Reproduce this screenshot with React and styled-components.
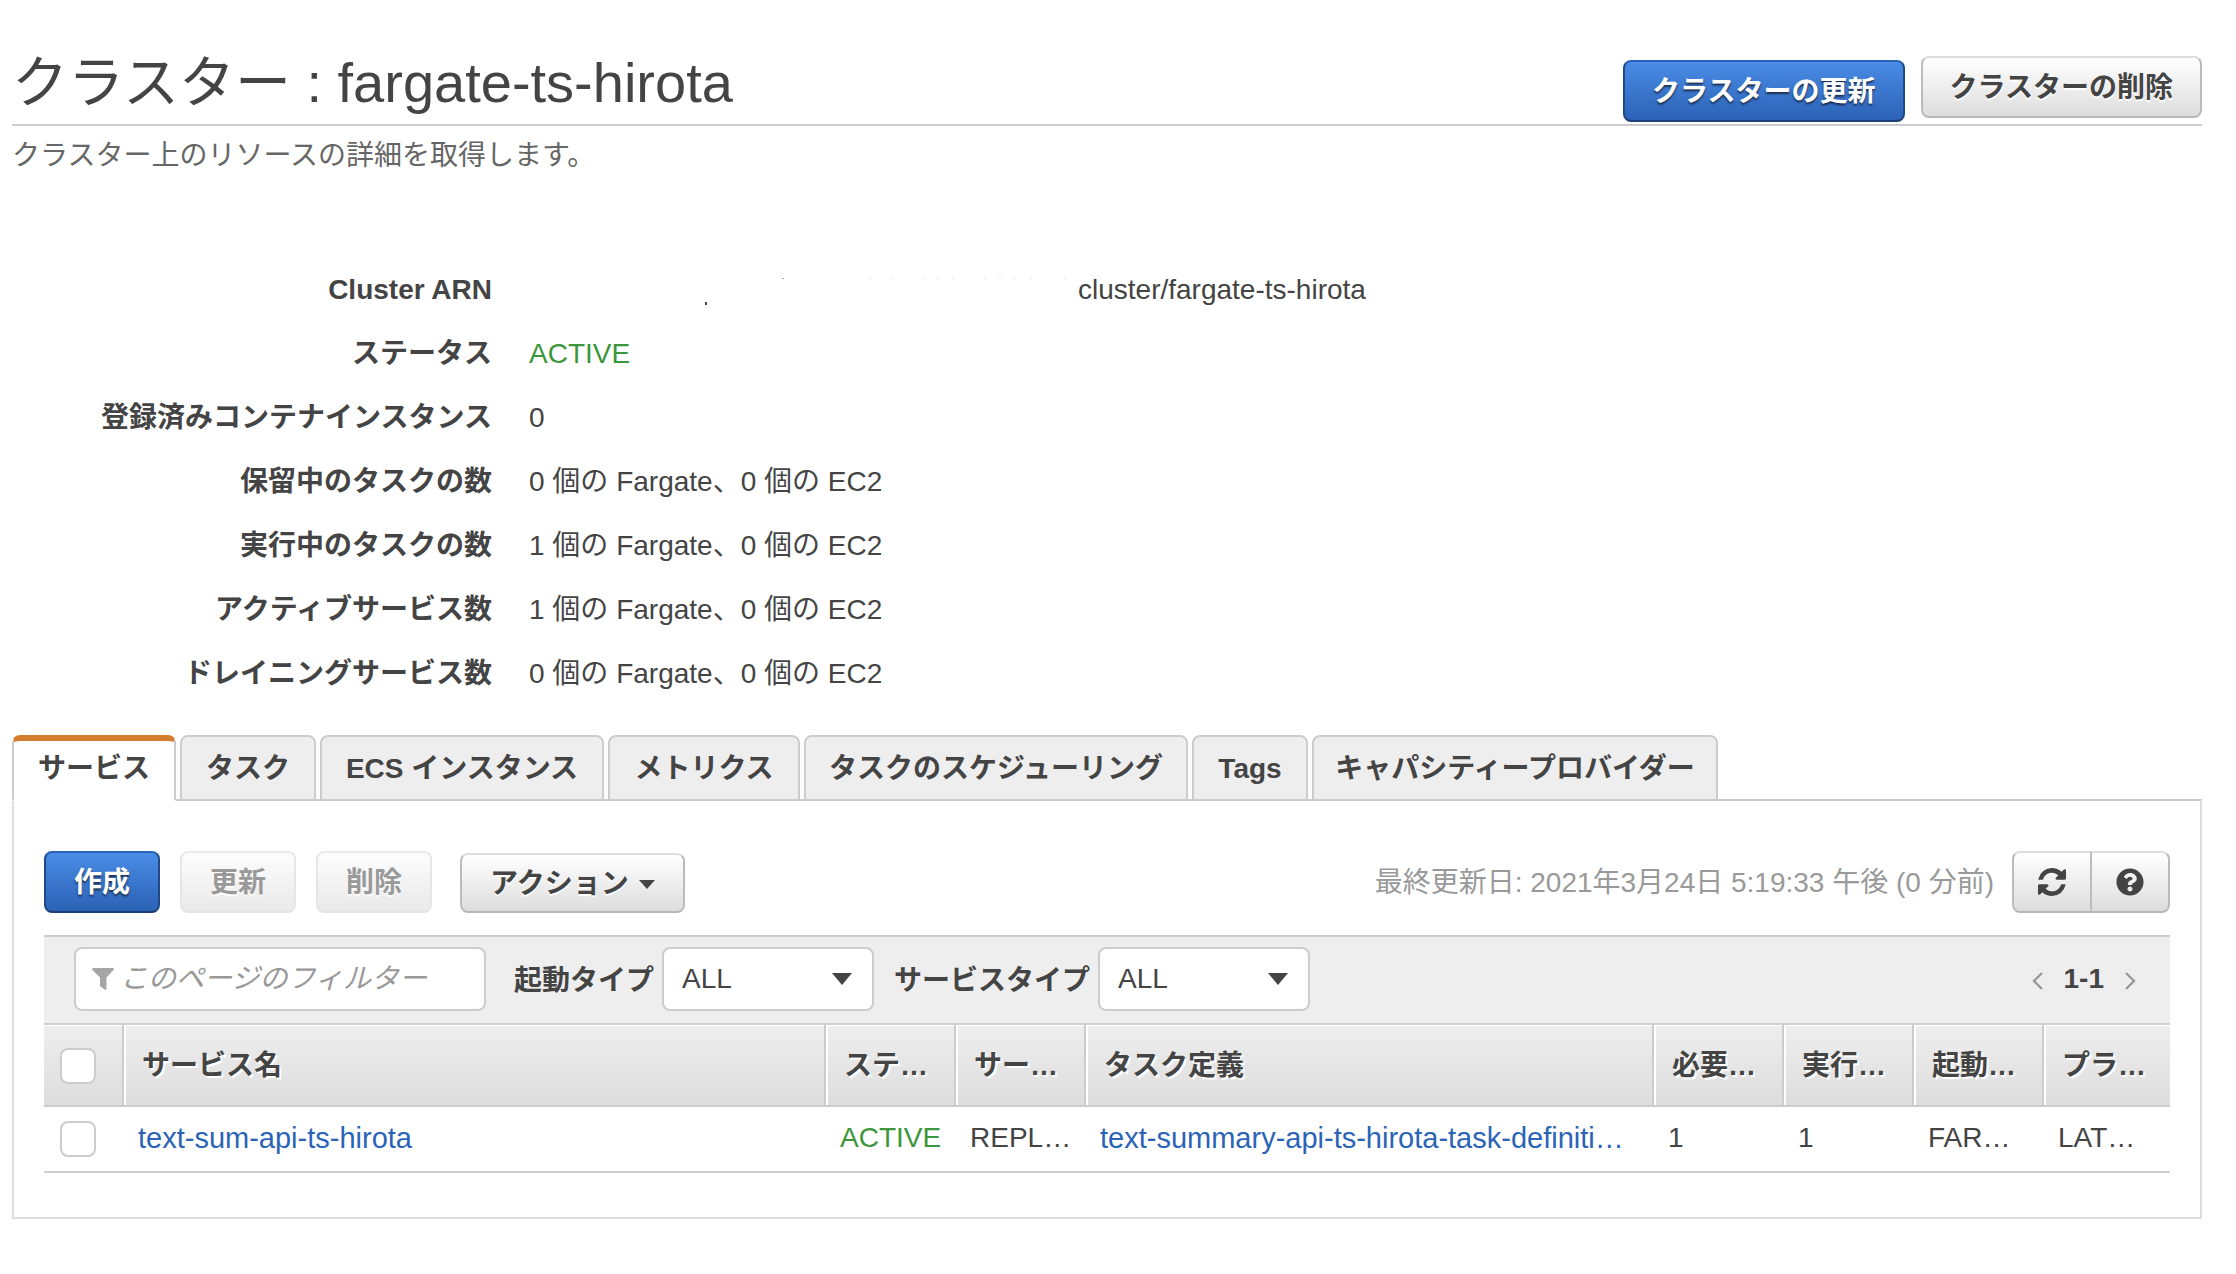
import React, { useState } from "react";
import styled, { createGlobalStyle, css } from "styled-components";
import { FaQuestionCircle } from "react-icons/fa";

const GlobalStyle = createGlobalStyle`
  * { box-sizing: border-box; }
  body {
    margin: 0;
    background: #fff;
    color: #444;
    font-family: "Liberation Sans", "Noto Sans CJK JP", sans-serif;
    font-size: 28px;
    line-height: 40px;
  }
  button, input, select { font: inherit; color: inherit; margin: 0; }
`;

const Page = styled.main`
  padding: 40px 34px 54px 12px;
`;

const PageHeader = styled.header`
  display: flex;
  justify-content: space-between;
  align-items: flex-start;
  height: 86px;
  border-bottom: 2px solid #ccc;
`;

const Title = styled.h1`
  margin: 0;
  font-size: 56px;
  font-weight: 400;
  line-height: 86px;
  white-space: nowrap;
`;

const HeaderActions = styled.div`
  display: flex;
  align-items: flex-start;
  gap: 16px;
  padding-top: 16px;
`;

const Lead = styled.p`
  margin: 10px 0 0;
  color: #666;
`;

const Button = styled.button`
  height: ${(p) => (p.$short ? 60 : 62)}px;
  padding: 2px 28px 0;
  border: 2px solid;
  border-color: #ddd #bbb #b7b7b7 #bbb;
  border-radius: 8px;
  background: linear-gradient(#fff, #ddd);
  color: #444;
  font-weight: 700;
  line-height: 40px;
  white-space: nowrap;
  text-shadow: 0 2px 1px #fff;
  display: inline-flex;
  align-items: center;
  justify-content: center;
  gap: 10px;
  ${(p) =>
    p.$primary &&
    css`
      border-color: #2a62b5 #1f4a8a #1c3f75 #1f4a8a;
      background: linear-gradient(#4a8ce6, #2b62b5);
      color: #fff;
      text-shadow: 0 2px 2px #1c2f50;
    `}
  &:disabled {
    border-color: #ebebeb #e6e6e6 #e4e4e4;
    background: linear-gradient(#fdfdfd, #e9e9e9);
    color: #999;
  }
`;

const HeaderButton = styled(Button)`
  padding: 2px 27px 0;
  margin-top: ${(p) => (p.$primary ? 4 : 0)}px;
`;

const Details = styled.dl`
  display: grid;
  grid-template-columns: 480px 1fr;
  column-gap: 37px;
  row-gap: 24px;
  margin: 94px 0 41px;
`;

const Term = styled.dt`
  font-weight: 700;
  text-align: right;
`;

const Value = styled.dd`
  margin: 0;
  display: flex;
  align-items: center;
  color: ${(p) => (p.$active ? "#3c963c" : "#444")};
`;

const Tabs = styled.div`
  display: flex;
  gap: 4px;
  margin-bottom: -2px;
`;

const Tab = styled.button`
  width: ${(p) => p.$width}px;
  height: 66px;
  padding: 2px 0 0;
  border: 2px solid #ccc;
  border-radius: 8px 8px 0 0;
  background: #eee;
  font-weight: 700;
  line-height: 40px;
  white-space: nowrap;
  text-align: center;
  ${(p) =>
    p.$selected &&
    css`
      padding: 0 0 2px;
      border-top: 6px solid #d47d2c;
      border-bottom-color: #fff;
      background: #fff;
    `}
`;

const Panel = styled.section`
  padding: 50px 30px 44px;
  border: 2px solid #ddd;
  border-top-color: #ccc;
`;

const Toolbar = styled.div`
  display: flex;
  align-items: flex-end;
  gap: 20px;
  margin-bottom: 22px;
`;

const MenuButton = styled(Button)`
  margin-left: 8px;
`;

const Updated = styled.span`
  margin-left: auto;
  margin-right: -2px;
  padding-bottom: 10px;
  color: #999;
`;

const IconGroup = styled.div`
  display: flex;
`;

const IconButton = styled(Button)`
  width: 80px;
  padding: 0;
  border-radius: ${(p) => (p.$end ? "0 8px 8px 0" : "8px 0 0 8px")};
  ${(p) => p.$end && "margin-left: -2px;"}
`;

const FilterBar = styled.div`
  display: flex;
  align-items: center;
  height: 88px;
  padding: 0 30px 2px;
  border-top: 2px solid #ccc;
  background: #eee;
`;

const SearchBox = styled.label`
  display: flex;
  align-items: center;
  gap: 6px;
  width: 412px;
  height: 64px;
  padding: 0 16px;
  border: 2px solid #ccc;
  border-radius: 8px;
  background: #fff;
`;

const SearchInput = styled.input`
  flex: 1;
  min-width: 0;
  padding: 0;
  border: 0;
  outline: 0;
  background: transparent;
  &::placeholder {
    color: #999;
    font-style: italic;
    opacity: 1;
  }
`;

const FilterLabel = styled.label`
  margin: 4px 8px 0 ${(p) => p.$gap}px;
  font-weight: 700;
`;

const SelectBox = styled.div`
  display: grid;
  align-items: center;
  width: 212px;
  > * { grid-area: 1 / 1; }
  > svg {
    justify-self: end;
    margin-right: 22px;
    pointer-events: none;
  }
`;

const Select = styled.select`
  appearance: none;
  width: 100%;
  height: 64px;
  padding: 0 48px 0 18px;
  border: 2px solid #ccc;
  border-radius: 8px;
  background: #fff;
`;

const Pager = styled.nav`
  display: flex;
  align-items: center;
  gap: 20px;
  margin-left: auto;
  margin-right: 4px;
  font-weight: 700;
`;

const PagerButton = styled.button`
  display: flex;
  padding: 4px 0 0;
  border: 0;
  background: none;
`;

const Table = styled.table`
  width: 100%;
  table-layout: fixed;
  border-collapse: separate;
  border-spacing: 0;
`;

const Col = styled.col`
  width: ${(p) => (p.$width ? `${p.$width}px` : "auto")};
`;

const HeadCell = styled.th`
  height: 84px;
  padding: 2px 0 0 ${(p) => (p.$check ? 16 : 18)}px;
  border-top: 2px solid #d0d0d0;
  border-bottom: 2px solid #ccc;
  border-right: ${(p) => (p.$last ? "0" : "2px solid #ccc")};
  background: linear-gradient(#eee, #ddd);
  box-shadow: inset ${(p) => (p.$check ? 0 : 2)}px 1px 0 #fff;
  text-align: left;
  text-shadow: 2px 2px 1px #fff;
  white-space: nowrap;
  overflow: hidden;
`;

const Cell = styled.td`
  height: 66px;
  padding: 0 0 2px 14px;
  border-bottom: 2px solid #d0d0d0;
  color: ${(p) => (p.$active ? "#3c963c" : "#444")};
  white-space: nowrap;
  overflow: hidden;
`;

const CheckCell = styled(Cell)`
  padding: 0 0 0 16px;
`;

const Checkbox = styled.input`
  appearance: none;
  display: block;
  width: 36px;
  height: 36px;
  border: 2px solid #ccc;
  border-radius: 8px;
  background: #fff;
  &:checked { background: #2b64b6; }
`;

const Link = styled.a`
  color: #2b64b6;
  font-size: 29px;
  text-decoration: none;
`;

const Caret = ({ w, h }) => (
  <svg width={w} height={h} viewBox="0 0 20 12" preserveAspectRatio="none" aria-hidden="true">
    <path d="M0 0H20L10 12Z" fill="#444" />
  </svg>
);

const Chevron = ({ d }) => (
  <svg width="12" height="18" viewBox="0 0 12 18" fill="none" stroke="#999" strokeWidth="2.4" aria-hidden="true">
    <path d={d} />
  </svg>
);

const Refresh = () => (
  <svg width="28" height="28" viewBox="0 0 1536 1536" fill="#444" aria-hidden="true">
    <path d="M1511 928q0 5-1 7-64 268-268 434.500T764 1536q-146 0-282.500-55T238 1324l-129 129q-19 19-45 19t-45-19-19-45V960q0-26 19-45t45-19h448q26 0 45 19t19 45-19 45l-137 137q71 66 161 102t187 36q134 0 250-65t186-179q11-17 53-117 8-23 30-23h192q13 0 22.500 9.500t9.500 22.500zm25-800v448q0 26-19 45t-45 19h-448q-26 0-45-19t-19-45 19-45l138-138Q969 256 768 256q-134 0-250 65T332 500q-11 17-53 117-8 23-30 23H50q-13 0-22.500-9.500T18 608v-7q65-268 270-434.500T768 0q146 0 284 55.500T1297 212l130-129q19-19 45-19t45 19 19 45z" />
  </svg>
);

const Funnel = () => (
  <svg width="22" height="22" viewBox="0 0 22 22" fill="#a6a6a6" aria-hidden="true">
    <path d="M1 0H21Q22.500 0.600 21.600 2L14.500 9.500V21Q14.300 22.300 13 21.800L8.400 18.500Q8 18 8 17.500V9.500L0.400 2Q-0.400 0.600 1 0Z" />
  </svg>
);

const specks = [340, 361, 393, 408, 423, 455, 470, 484, 501, 535];
const Redacted = () => (
  <svg width="549" height="32" viewBox="0 0 549 32" aria-hidden="true">
    <rect x="176" y="28" width="2" height="3" fill="#444" />
    <rect x="253" y="4" width="2" height="1" fill="#aaa" />
    {specks.map((x) => (
      <rect key={x} x={x} y="4" width="2" height="1" fill="#e4e4e4" />
    ))}
  </svg>
);

const details = [
  ["登録済みコンテナインスタンス", "0"],
  ["保留中のタスクの数", "0 個の Fargate、0 個の EC2"],
  ["実行中のタスクの数", "1 個の Fargate、0 個の EC2"],
  ["アクティブサービス数", "1 個の Fargate、0 個の EC2"],
  ["ドレイニングサービス数", "0 個の Fargate、0 個の EC2"],
];

const tabs = [
  ["サービス", 164],
  ["タスク", 136],
  ["ECS インスタンス", 284],
  ["メトリクス", 192],
  ["タスクのスケジューリング", 384],
  ["Tags", 116],
  ["キャパシティープロバイダー", 406],
];

const columns = ["サービス名", "ステ…", "サー…", "タスク定義", "必要…", "実行…", "起動…", "プラ…"];
const widths = [80, 702, 130, 130, null, 130, 130, 130, 126];

export default function App() {
  const [selected, setSelected] = useState(0);
  return (
    <>
      <GlobalStyle />
      <Page lang="ja">
        <PageHeader>
          <Title>クラスター : fargate-ts-hirota</Title>
          <HeaderActions>
            <HeaderButton $primary>クラスターの更新</HeaderButton>
            <HeaderButton>クラスターの削除</HeaderButton>
          </HeaderActions>
        </PageHeader>
        <Lead>クラスター上のリソースの詳細を取得します。</Lead>

        <Details>
          <Term>Cluster ARN</Term>
          <Value>
            <Redacted />
            cluster/fargate-ts-hirota
          </Value>
          <Term>ステータス</Term>
          <Value $active>ACTIVE</Value>
          {details.map(([term, value]) => (
            <React.Fragment key={term}>
              <Term>{term}</Term>
              <Value>{value}</Value>
            </React.Fragment>
          ))}
        </Details>

        <Tabs role="tablist">
          {tabs.map(([label, width], i) => (
            <Tab
              key={label}
              role="tab"
              aria-selected={i === selected}
              $selected={i === selected}
              $width={width}
              onClick={() => setSelected(i)}
            >
              {label}
            </Tab>
          ))}
        </Tabs>

        <Panel>
          <Toolbar>
            <Button $primary>作成</Button>
            <Button disabled>更新</Button>
            <Button disabled>削除</Button>
            <MenuButton $short>
              アクション
              <Caret w={16} h={9} />
            </MenuButton>
            <Updated>最終更新日: 2021年3月24日 5:19:33 午後 (0 分前)</Updated>
            <IconGroup>
              <IconButton aria-label="更新">
                <Refresh />
              </IconButton>
              <IconButton $end aria-label="ヘルプ">
                <FaQuestionCircle size={28} />
              </IconButton>
            </IconGroup>
          </Toolbar>

          <FilterBar>
            <SearchBox>
              <Funnel />
              <SearchInput type="text" aria-label="フィルター" placeholder="このページのフィルター" />
            </SearchBox>
            <FilterLabel htmlFor="launch-type" $gap={28}>
              起動タイプ
            </FilterLabel>
            <SelectBox>
              <Select id="launch-type">
                <option>ALL</option>
              </Select>
              <Caret w={20} h={12} />
            </SelectBox>
            <FilterLabel htmlFor="service-type" $gap={20}>
              サービスタイプ
            </FilterLabel>
            <SelectBox>
              <Select id="service-type">
                <option>ALL</option>
              </Select>
              <Caret w={20} h={12} />
            </SelectBox>
            <Pager>
              <PagerButton aria-label="前へ">
                <Chevron d="M10 1L2 9L10 17" />
              </PagerButton>
              1-1
              <PagerButton aria-label="次へ">
                <Chevron d="M2 1L10 9L2 17" />
              </PagerButton>
            </Pager>
          </FilterBar>

          <Table>
            <colgroup>
              {widths.map((w, i) => (
                <Col key={i} $width={w} />
              ))}
            </colgroup>
            <thead>
              <tr>
                <HeadCell $check>
                  <Checkbox type="checkbox" aria-label="すべて選択" />
                </HeadCell>
                {columns.map((name, i) => (
                  <HeadCell key={name} $last={i === columns.length - 1}>
                    {name}
                  </HeadCell>
                ))}
              </tr>
            </thead>
            <tbody>
              <tr>
                <CheckCell>
                  <Checkbox type="checkbox" aria-label="text-sum-api-ts-hirota" />
                </CheckCell>
                <Cell>
                  <Link href="#service">text-sum-api-ts-hirota</Link>
                </Cell>
                <Cell $active>ACTIVE</Cell>
                <Cell>REPL…</Cell>
                <Cell>
                  <Link href="#task">text-summary-api-ts-hirota-task-definiti…</Link>
                </Cell>
                <Cell>1</Cell>
                <Cell>1</Cell>
                <Cell>FAR…</Cell>
                <Cell>LAT…</Cell>
              </tr>
            </tbody>
          </Table>
        </Panel>
      </Page>
    </>
  );
}
